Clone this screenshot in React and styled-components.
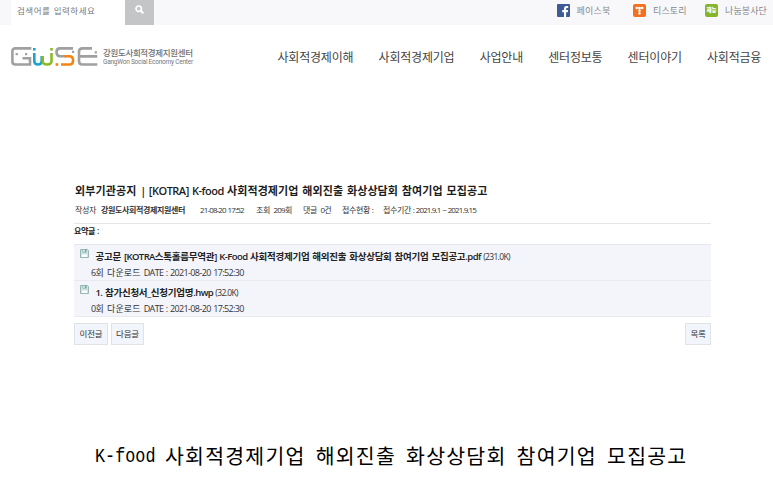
import React from "react";
import styled, { createGlobalStyle } from "styled-components";

const Global = createGlobalStyle`
  * { box-sizing: border-box; }
  body { margin: 0; background: #fff; overflow: hidden;
    font-family: "Open Sans", "Noto Sans CJK KR", sans-serif; color: #333; }
`;
const Page = styled.div`width: 773px; height: 478px; overflow: hidden;`;
const TopBar = styled.div`
  height: 25px; background: #f8f8fb; display: flex; padding-left: 11px;
`;
const Search = styled.div`
  width: 114px; background: #fff; padding-left: 6px; line-height: 16px;
`;
const SearchButton = styled.div`
  width: 29px; background: #c4c5c7; display: flex; justify-content: center; padding-top: 5px;
`;
const Text = styled.span`
  display: inline-block;
  white-space: pre;
  font-family: ${p => p.$font || '"Noto Sans CJK KR"'}, "Noto Sans CJK KR", sans-serif;
  font-size: ${p => p.$size || 9}px;
  font-weight: ${p => p.$weight || 400};
  letter-spacing: ${p => p.$ls || 0}px;
  word-spacing: ${p => p.$ws || 0}px;
  color: ${p => p.$color || "#333"};
`;
const Latin = styled.span`letter-spacing: ${p => p.$ls}px; word-spacing: ${p => p.$ws || 0}px;`;
const Socials = styled.div`display: flex; margin-left: 402.5px; padding-top: 4px;`;
const Social = styled.div`
  display: flex; gap: 7px; height: 13px; line-height: 13px; width: ${p => p.$w}px;
  flex: none;
  svg { flex: none; }
`;
const Header = styled.header`height: 63px; display: flex; padding: 22px 0 0 11px;`;
const LogoText = styled.div`
  width: 179.5px; padding-left: 5px; display: flex; flex-direction: column; line-height: 10px;
`;
const Nav = styled.nav`display: flex; gap: 25.2px; line-height: 20px; flex: none;`;
const Article = styled.main`width: 637px; margin: 93px 0 0 74px;`;
const Title = styled.div`height: 19px; line-height: 16px; padding-left: 1px;`;
const Meta = styled.div`
  height: 24px; line-height: 14px; display: flex; border-bottom: 1px solid #e4e5e7; padding-left: 1px;
`;
const MetaItem = styled.div`width: ${p => p.$w}px; flex: none;`;
const Summary = styled.div`height: 20px; line-height: 9px;`;
const Files = styled.div`background: #f3f5fa; border-top: 1px solid #e6e7ea;`;
const FileRow = styled.div`
  height: 36px; border-bottom: 1px solid #e9ebef; padding: 3px 0 0 6px;
`;
const FileName = styled.div`
  display: flex; height: 15px; line-height: 17px;
  svg { margin: 1px 6.5px 0 0; flex: none; }
`;
const FileInfo = styled.div`padding-left: 11px; line-height: 15px; height: 15px;`;
const Buttons = styled.div`display: flex; gap: 3px; margin-top: 6px;`;
const Button = styled.div`
  width: ${p => p.$w}px; height: 22px; border: 1px solid #e0e3e6; background: #f2f5fb;
  text-align: center; line-height: 15px; margin-left: ${p => (p.$end ? "auto" : "0")};
`;
const Headline = styled.div`
  display: flex; margin: 95px 0 0 95px; height: 30px; line-height: 30px;
`;
const Mono = styled.span`
  width: 70px; white-space: pre; font: 20px/33px "Liberation Mono", monospace; color: #000;
  transform: scaleX(0.84); transform-origin: 0 50%;
`;

/* Korean text whose Latin words and digits carry their own tracking. */
const Mixed = ({ text, latin, gap, ...rest }) => (
  <Text $font='"Open Sans"' {...rest}>
    {text.split(/([!-~]+(?: +[!-~]+)* ?)/).map((run, i) =>
      i % 2 ? <Latin key={i} $ls={latin} $ws={gap}>{run}</Latin> : run
    )}
  </Text>
);

const Disk = () => (
  <svg width="9" height="9" viewBox="0 0 9 9">
    <path d="M.5.5h7l1 1v7h-8z" fill="#cfe3e1" stroke="#96b8b5" />
    <path d="M2.5 0h4v3.5h-4z" fill="#7fa8a5" />
    <path d="M2 5.5h5V8H2z" fill="#fff" />
    <path d="M3.2.8h1.4v1.9H3.2z" fill="#fff" />
  </svg>
);
const Logo = () => (
  <svg width="87" height="20" viewBox="0 0 87 20" fill="none" strokeWidth="2.6">
    <g stroke="#a0a0a2">
      <path d="M20.3 1.4H4.4Q1.4 1.4 1.4 4.4v10.1q0 3 3 3H19V11.3H11.5" />
      <path d="M62 1.4H49Q45.5 1.4 45.5 5.2T49 9.3H55" />
      <path d="M81 1.4H71.5Q68 1.4 68 4.6v9.7q0 3.2 3.5 3.2H86.3M69 9.4h17.3" />
    </g>
    <g fill="#a0a0a2">
      <rect x="4.6" y="6" width="2.2" height="2.2" /><rect x="14" y="6" width="2.2" height="2.2" />
      <rect x="61" y="3.8" width="2.2" height="2.2" /><rect x="83.7" y="4.3" width="2.2" height="2.2" />
    </g>
    <path d="M23.3 6v8q0 3.5 3.7 3.5t3.7-3.5V9" stroke="#1ba6c9" />
    <path d="M31.7 9v5q0 3.5 4.4 3.5t4.4-3.5V6" stroke="#8cba27" />
    <path d="M53.5 9.3h4.7q3.9 0 3.9 4.1t-3.9 4.1H50" stroke="#f58410" />
    <rect x="22" y="1" width="2.6" height="2.6" fill="#1ba6c9" />
    <rect x="39.2" y="1" width="2.6" height="2.6" fill="#8cba27" />
    <rect x="44.6" y="16.2" width="2.6" height="2.6" fill="#f58410" />
  </svg>
);
const Facebook = () => (
  <svg width="13" height="13" viewBox="0 0 13 13">
    <rect width="13" height="13" rx="1" fill="#3e5b98" />
    <path d="M7 13V8.2H5.2V6.1H7V4.6Q7 2 9.6 2h1.6v2H10q-.9 0-.9.9v1.2h2l-.3 2.1H9.1V13z" fill="#fff" />
  </svg>
);
const Tistory = () => (
  <svg width="13" height="13" viewBox="0 0 13 13">
    <rect width="13" height="13" rx="2" fill="#f37021" />
    <g fill="#fff">
      <circle cx="3.7" cy="4" r="1.2" /><circle cx="6.5" cy="4" r="1.2" /><circle cx="9.3" cy="4" r="1.2" />
      <circle cx="6.5" cy="6.7" r="1.2" /><circle cx="6.5" cy="9.4" r="1.2" />
      <path d="M3.7 3.4h5.6v1.2H3.7zM5.9 4h1.2v5.4H5.9z" />
    </g>
  </svg>
);
const Badge = styled.span`
  width: 13px; height: 13px; border-radius: 2px; background: #86b52a; color: #fff; flex: none;
  font: 900 5.5px/12px "Noto Sans CJK KR", sans-serif; text-align: center; white-space: nowrap;
`;

const menu = ["사회적경제이해", "사회적경제기업", "사업안내", "센터정보통", "센터이야기", "사회적금융"];
const meta = [
  { w: 26, text: "작성자" },
  { w: 99, text: "강원도사회적경제지원센터", strong: true },
  { w: 56, text: "21-08-20 17:52", latin: -0.85 },
  { w: 47, text: "조회  209회" },
  { w: 39, text: "댓글  0건" },
  { w: 41, text: "접수현황 :" },
  { w: 120, text: "접수기간 : 2021.9.1 ~ 2021.9.15", latin: -0.88 },
];
const files = [
  { name: "공고문 [KOTRA스톡홀름무역관] K-Food 사회적경제기업 해외진출 화상상담회 참여기업 모집공고.pdf", size: "(231.0K)", count: "6" },
  { name: "1. 참가신청서_신청기업명.hwp", size: "(32.0K)", count: "0" },
];

export default function App() {
  return (
    <Page>
      <Global />
      <TopBar>
        <Search><Text $size={8.5} $ls={0.5} $ws={1} $color="#777">검색어를 입력하세요</Text></Search>
        <SearchButton>
          <svg width="9" height="9" viewBox="0 0 9 9" fill="none" stroke="#fff">
            <circle cx="3.7" cy="3.7" r="2.7" strokeWidth="1.7" />
            <path d="M5.8 5.8 8.3 8.3" strokeWidth="2" />
          </svg>
        </SearchButton>
        <Socials>
          <Social $w={76.5}><Facebook /><Text $ls={0.2} $color="#888">페이스북</Text></Social>
          <Social $w={72}><Tistory /><Text $ls={0.1} $color="#888">티스토리</Text></Social>
          <Social $w={68}><Badge>재능</Badge><Text $ls={0.1} $color="#888">나눔봉사단</Text></Social>
        </Socials>
      </TopBar>
      <Header>
        <Logo />
        <LogoText>
          <Text $size={8.5} $ls={-0.35} $weight={500} $color="#6f6f71">강원도사회적경제지원센터</Text>
          <Text $font="Roboto" $size={6.5} $ls={-0.23} $color="#77777a">GangWon Social Economy Center</Text>
        </LogoText>
        <Nav>
          {menu.map(m => <Text key={m} $size={12} $ls={-0.2} $color="#444">{m}</Text>)}
        </Nav>
      </Header>
      <Article>
        <Title>
          <Mixed $size={11} $weight={600} $ls={0.12} $ws={0.7} latin={-0.5} gap={0.8} $color="#1c1c1c"
            text="외부기관공지 | [KOTRA] K-food 사회적경제기업 해외진출 화상상담회 참여기업 모집공고" />
        </Title>
        <Meta>
          {meta.map(m => (
            <MetaItem key={m.text} $w={m.w}>
              <Mixed $size={8} $ls={-0.36} latin={m.latin || -0.75} gap={0.6} $weight={m.strong ? 600 : 400} text={m.text} />
            </MetaItem>
          ))}
        </Meta>
        <Summary><Mixed $size={8} $weight={600} $ls={-0.3} latin={0} $color="#222" text="요약글 :" /></Summary>
        <Files>
          {files.map(f => (
            <FileRow key={f.name}>
              <FileName>
                <Disk />
                <Mixed $size={9.5} $weight={600} $ls={-0.27} $ws={0.8} latin={-0.58} gap={0.7} $color="#222" text={f.name} />
                <Mixed $size={8.5} latin={-0.65} text={" " + f.size} />
              </FileName>
              <FileInfo>
                <Mixed $size={9} $ls={0.15} $ws={0.5} latin={-0.62} gap={0.7} text={f.count + "회 다운로드 DATE : 2021-08-20 17:52:30"} />
              </FileInfo>
            </FileRow>
          ))}
        </Files>
        <Buttons>
          <Button $w={34}><Text $size={8.5} $ls={-0.2}>이전글</Text></Button>
          <Button $w={33}><Text $size={8.5} $ls={-0.2}>다음글</Text></Button>
          <Button $w={26} $end><Text $size={8.5} $ls={-0.2}>목록</Text></Button>
        </Buttons>
      </Article>
      <Headline>
        <Mono>K-food</Mono>
        <Text $size={20.5} $ls={1.22} $ws={4.3} $color="#000">사회적경제기업 해외진출 화상상담회 참여기업 모집공고</Text>
      </Headline>
    </Page>
  );
}
